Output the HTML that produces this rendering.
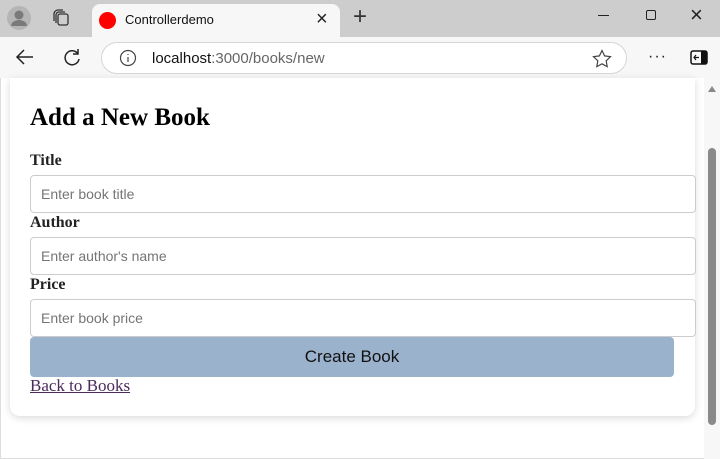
<!DOCTYPE html>
<html><head><style>
*{box-sizing:border-box;margin:0;padding:0}
body{width:720px;height:459px;overflow:hidden;background:#f7f7f7;font-family:"Liberation Sans",sans-serif;position:relative}
.tabbar{position:absolute;left:0;top:0;width:720px;height:37px;background:#cdcdcd}
.tab{position:absolute;left:92px;top:4px;width:248px;height:33px;background:#f7f7f7;border-radius:8px 8px 0 0}
.toolbar{position:absolute;left:0;top:37px;width:720px;height:41px;background:#f7f7f7}
.url{position:absolute;left:101px;top:42px;width:526px;height:32px;border:1px solid #d6d6d6;border-radius:16px;background:#fff}
.page{position:absolute;left:0;top:78px;width:720px;height:381px;background:#fff;border-left:1px solid #ddd;border-bottom:1px solid #ddd}
.card{position:absolute;left:9px;top:0;width:685px;height:338px;background:#fff;border-radius:0 0 10px 10px;box-shadow:0 2px 8px rgba(0,0,0,.15)}
.sb{position:absolute;right:0;top:78px;width:16px;height:381px;background:#f7f7f7}
h1{position:absolute;left:30px;top:104px;font:bold 25px "Liberation Serif",serif;color:#000}
label{position:absolute;left:30px;font:bold 16px "Liberation Serif",serif;color:#222}
.in{position:absolute;left:30px;width:666px;height:38px;border:1px solid #ccc;border-radius:4px;background:#fff;font-size:14px;color:#757575;padding:10px 10px}
.btn{position:absolute;left:30px;top:337px;width:644px;height:40px;background:#9bb2cd;border-radius:4px;text-align:center;line-height:40px;font-size:17px;color:#111}
a{position:absolute;left:30px;top:376px;font:17px "Liberation Serif",serif;color:#4b2a5c;text-decoration:underline}
</style></head><body>
<div class="tabbar">
<svg style="position:absolute;left:7px;top:6px" width="24" height="24"><circle cx="12" cy="12" r="12" fill="#b5b5b5"/><circle cx="12" cy="9" r="4.5" fill="#7a7a7a"/><path d="M4 20a8 6 0 0 1 16 0z" fill="#7a7a7a"/></svg>
<svg style="position:absolute;left:52px;top:9px" width="18" height="18" fill="none" stroke="#333" stroke-width="1.3"><rect x="6" y="5" width="10" height="11" rx="2"/><path d="M4 14V6a3 3 0 0 1 3-3h6M2 12V5a4 4 0 0 1 4-4h5"/></svg>
<div class="tab">
<div style="position:absolute;left:7px;top:8px;width:17px;height:17px;border-radius:50%;background:#f00"></div>
<div style="position:absolute;left:33px;top:8px;font-size:13px;color:#111">Controllerdemo</div>
<div style="position:absolute;left:224px;top:4px;font-size:20px;color:#222">×</div>
</div>
<div style="position:absolute;left:353px;top:3px;font-size:24px;color:#333;font-weight:300">+</div>
<div style="position:absolute;left:598px;top:15px;width:11px;height:1.3px;background:#222"></div>
<div style="position:absolute;left:646px;top:10px;width:10px;height:10px;border:1.3px solid #222;border-radius:2px"></div>
<div style="position:absolute;left:690px;top:2px;font-size:22px;color:#222">×</div>
</div>
<div class="toolbar"></div>
<svg style="position:absolute;left:15px;top:48px" width="20" height="18" fill="none" stroke="#222" stroke-width="1.5"><path d="M18 9H2M9 2 2 9l7 7"/></svg>
<svg style="position:absolute;left:62px;top:48px" width="20" height="20" fill="none" stroke="#222" stroke-width="1.5"><path d="M16 6A7 7 0 1 0 17 11"/><path d="M16 1v5h-5"/></svg>
<div class="url">
<svg style="position:absolute;left:17px;top:6px" width="18" height="18" fill="none" stroke="#444" stroke-width="1.2"><circle cx="9" cy="9" r="7.5"/><path d="M9 8v5M9 5v1"/></svg>
<div style="position:absolute;left:50px;top:7px;font-size:15px;color:#111">localhost<span style="color:#666">:3000/books/new</span></div>
<svg style="position:absolute;left:490px;top:6px" width="20" height="20" fill="none" stroke="#444" stroke-width="1.2"><path d="M10 1.5l2.6 5.4 5.9.8-4.3 4.1 1 5.8L10 14.8l-5.2 2.8 1-5.8L1.5 7.7l5.9-.8z"/></svg>
</div>
<div style="position:absolute;left:648px;top:48px;font-size:16px;color:#222;letter-spacing:1px">···</div>
<svg style="position:absolute;left:690px;top:50px" width="18" height="15"><rect x="1" y="1" width="16" height="13" rx="2" fill="none" stroke="#111" stroke-width="1.5"/><rect x="11" y="1" width="6" height="13" fill="#111"/><path d="M9 7.5H4M6 5 4 7.5 6 10" stroke="#111" fill="none" stroke-width="1.2"/></svg>
<div class="page"><div class="card"></div></div>
<div class="sb">
<div style="position:absolute;left:4px;top:8px;width:0;height:0;border-left:4px solid transparent;border-right:4px solid transparent;border-bottom:6px solid #888"></div>
<div style="position:absolute;left:4px;top:70px;width:8px;height:277px;background:#8a8a8a;border-radius:4px"></div>
<div style="position:absolute;left:4px;top:336px;width:0;height:0;border-left:4px solid transparent;border-right:4px solid transparent;border-top:6px solid #888"></div>
</div>
<h1>Add a New Book</h1>
<label style="top:152px">Title</label>
<div class="in" style="top:175px">Enter book title</div>
<label style="top:214px">Author</label>
<div class="in" style="top:237px">Enter author's name</div>
<label style="top:276px">Price</label>
<div class="in" style="top:299px">Enter book price</div>
<div class="btn">Create Book</div>
<a>Back to Books</a>
</body></html>
